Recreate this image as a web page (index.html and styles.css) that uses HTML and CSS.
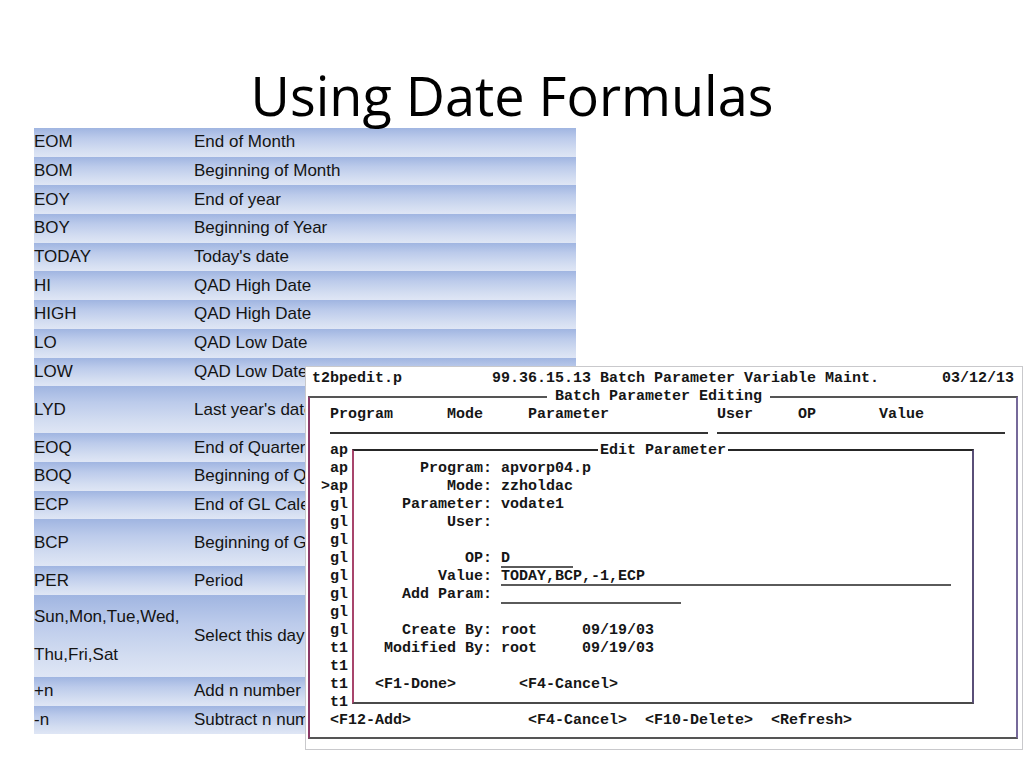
FILE: index.html
```html
<!DOCTYPE html>
<html>
<head>
<meta charset="utf-8">
<title>Using Date Formulas</title>
<link rel="stylesheet" href="styles.css">
</head>
<body>
<div class="slide">
  <h1 class="title">Using Date Formulas</h1>
  <div class="codes">
    <div class="row"><span class="code">EOM</span><span class="desc">End of Month</span></div>
    <div class="row"><span class="code">BOM</span><span class="desc">Beginning of Month</span></div>
    <div class="row"><span class="code">EOY</span><span class="desc">End of year</span></div>
    <div class="row"><span class="code">BOY</span><span class="desc">Beginning of Year</span></div>
    <div class="row"><span class="code">TODAY</span><span class="desc">Today's date</span></div>
    <div class="row"><span class="code">HI</span><span class="desc">QAD High Date</span></div>
    <div class="row"><span class="code">HIGH</span><span class="desc">QAD High Date</span></div>
    <div class="row"><span class="code">LO</span><span class="desc">QAD Low Date</span></div>
    <div class="row"><span class="code">LOW</span><span class="desc">QAD Low Date</span></div>
    <div class="row tall"><span class="code">LYD</span><span class="desc">Last year's date</span></div>
    <div class="row"><span class="code">EOQ</span><span class="desc">End of Quarter</span></div>
    <div class="row"><span class="code">BOQ</span><span class="desc">Beginning of Quarter</span></div>
    <div class="row"><span class="code">ECP</span><span class="desc">End of GL Calendar Period</span></div>
    <div class="row tall"><span class="code">BCP</span><span class="desc">Beginning of GL Calendar Period</span></div>
    <div class="row"><span class="code">PER</span><span class="desc">Period</span></div>
    <div class="row big"><span class="code">Sun,Mon,Tue,Wed,<br>Thu,Fri,Sat</span><span class="desc">Select this day of the week</span></div>
    <div class="row"><span class="code">+n</span><span class="desc">Add n number of days</span></div>
    <div class="row"><span class="code">-n</span><span class="desc">Subtract n number of days</span></div>
  </div>

  <div class="term">
    <div class="line head">t2bpedit.p          99.36.15.13 Batch Parameter Variable Maint.       03/12/13</div>
    <div class="frame">
      <span class="frame-title">Batch Parameter Editing</span>
      <div class="line">  Program      Mode     Parameter            User     OP       Value</div>
      <div class="line">  <span class="rule rule-a"></span> <span class="rule rule-b"></span></div>
      <div class="line">  ap</div>
      <div class="line">  ap</div>
      <div class="line"> &gt;ap</div>
      <div class="line">  gl</div>
      <div class="line">  gl</div>
      <div class="line">  gl</div>
      <div class="line">  gl</div>
      <div class="line">  gl</div>
      <div class="line">  gl</div>
      <div class="line">  gl</div>
      <div class="line">  gl</div>
      <div class="line">  t1</div>
      <div class="line">  t1</div>
      <div class="line">  t1</div>
      <div class="line">  t1</div>
      <div class="line">  &lt;F12-Add&gt;             &lt;F4-Cancel&gt;  &lt;F10-Delete&gt;  &lt;Refresh&gt;</div>

      <div class="dialog">
        <span class="dialog-title">Edit Parameter</span>
        <div class="line">       Program: apvorp04.p</div>
        <div class="line">          Mode: zzholdac</div>
        <div class="line">     Parameter: vodate1</div>
        <div class="line">          User:</div>
        <div class="line"></div>
        <div class="line">            OP: <span class="field field-8">D</span></div>
        <div class="line">         Value: <span class="field field-50">TODAY,BCP,-1,ECP</span></div>
        <div class="line">     Add Param: <span class="field field-20"></span></div>
        <div class="line"></div>
        <div class="line">     Create By: root     09/19/03</div>
        <div class="line">   Modified By: root     09/19/03</div>
        <div class="line"></div>
        <div class="line">  &lt;F1-Done&gt;       &lt;F4-Cancel&gt;</div>
      </div>
    </div>
  </div>
</div>
</body>
</html>
```

FILE: styles.css
```css
html, body {
  margin: 0;
  padding: 0;
  background: #ffffff;
}

.slide {
  position: relative;
  width: 1024px;
  height: 768px;
  overflow: hidden;
  background: #ffffff;
}

.title {
  margin: 0 0 6px 0;
  padding-top: 69px;
  height: 53px;
  font-family: "Open Sans", "Noto Sans", sans-serif;
  font-weight: 400;
  font-size: 54px;
  line-height: 53px;
  text-align: center;
  color: #000000;
}

/* ---------- code table ---------- */
.codes {
  margin-left: 34px;
  width: 542px;
  font-family: "Liberation Sans", Arial, sans-serif;
  font-size: 17px;
  color: #141414;
}

.row {
  display: flex;
  align-items: center;
  height: 28.7px;
  background: linear-gradient(to bottom, #a0b5e1 0%, #bccbeb 35%, #d3ddf1 75%, #dfe6f5 100%);
}

.row.tall {
  height: 47px;
}

.row.big {
  height: 82px;
}

.code {
  flex: none;
  width: 160px;
  white-space: nowrap;
}

.big .code {
  line-height: 38px;
}

.desc {
  white-space: nowrap;
}

/* ---------- terminal screenshot (overlays the table) ---------- */
.term {
  position: absolute;
  left: 305px;
  top: 366px;
  width: 718px;
  height: 384px;
  box-sizing: border-box;
  border: 1px solid #c9c9cc;
  padding-top: 3px;
  background: #ffffff;
  font-family: "Liberation Mono", "DejaVu Sans Mono", monospace;
  font-weight: 700;
  font-size: 15px;
  line-height: 18px;
  color: #161616;
}

.line {
  width: max-content;
  min-width: 1ch;
  height: 18px;
  white-space: pre;
}

.head {
  padding-left: 6px;
}

.frame {
  position: relative;
  margin: 8px 0 0 2px;
  width: 710px;
  box-sizing: border-box;
  border: 2px solid #555555;
  border-left-color: #8b3a68;
  border-right-color: #76699a;
  padding: 8px 0 7px 2px;
}

.frame-title {
  position: absolute;
  top: -10px;
  left: 237px;
  padding: 0 8px;
  background: #ffffff;
  white-space: pre;
}

.rule {
  display: inline-block;
  height: 8px;
  border-bottom: 2px solid #333333;
  vertical-align: top;
}

.rule-a {
  width: 42ch;
}

.rule-b {
  width: 32ch;
}

.dialog {
  position: absolute;
  left: 42px;
  top: 51px;
  width: 622px;
  height: 255px;
  box-sizing: border-box;
  border: 2px solid #262626;
  border-left-color: #a8456c;
  border-right-color: #5a4f78;
  border-bottom-color: #4a4a4a;
  padding: 9px 0 0 3px;
  background: #ffffff;
}

.dialog-title {
  position: absolute;
  top: -9px;
  left: 244px;
  padding: 0 2px;
  background: #ffffff;
  white-space: pre;
}

.field {
  display: inline-block;
  height: 18px;
  box-sizing: border-box;
  border-bottom: 2px solid #5a5a5a;
  vertical-align: top;
}

.field-8 {
  width: 8ch;
}

.field-20 {
  width: 20ch;
}

.field-50 {
  width: 50ch;
}
```
